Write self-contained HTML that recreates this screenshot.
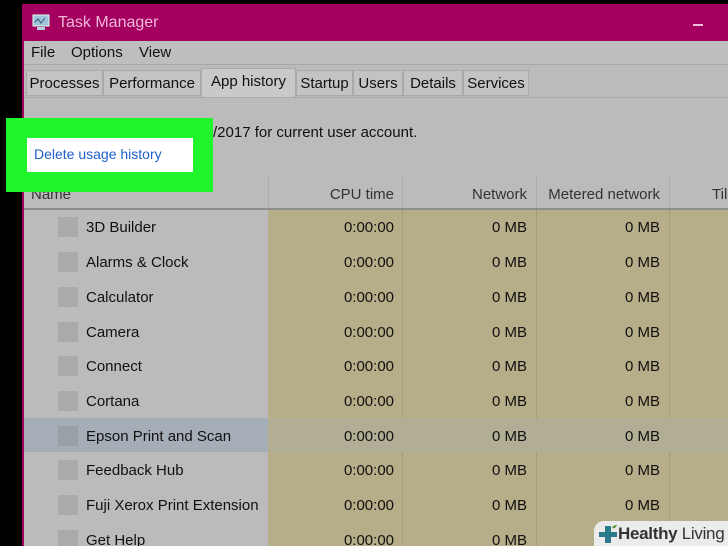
<!DOCTYPE html>
<html style="overflow:hidden;height:546px"><head><style>
body{margin:0;width:728px;height:546px;overflow:hidden;background:#000;font-family:"Liberation Sans",sans-serif;position:relative}
.a{position:absolute;white-space:nowrap}
.win{left:22px;top:4px;width:706px;height:542px;background:#bbbbbb;border-left:2px solid #a3005f;box-sizing:border-box}
.title{left:22px;top:4px;width:706px;height:37px;background:#a3005f;color:#f0b8d8;font-size:16px}
.menu{left:24px;top:41px;width:704px;height:23px;background:#bebebe;border-bottom:1px solid #a8a8a8;font-size:15px;color:#111}
.tab{position:absolute;top:70px;height:26px;border:1px solid #a9a9a9;background:#c3c3c3;font-size:15px;line-height:26px;text-align:center;color:#111;box-sizing:border-box;white-space:nowrap}
.row{position:absolute;left:24px;width:704px;height:34px;font-size:15px;color:#111;overflow:hidden}
.c{position:absolute;top:2px;height:32px;line-height:34px;text-align:right;white-space:nowrap}
.ic{position:absolute;left:34px;top:8px;width:20px;height:20px;background:#aaaaaa}
</style></head><body>
<div class="a win"></div>
<div class="a title"><svg class="a" style="left:9px;top:9px" width="20" height="18"><rect x="2" y="2" width="16" height="11" fill="#9fc4d8" stroke="#dfe" /><path d="M4 9 L7 6 L10 10 L14 5" stroke="#357" fill="none"/><rect x="6" y="14" width="8" height="3" fill="#bcd"/></svg><span class="a" style="left:36px;top:10px">Task Manager</span><div class="a" style="left:671px;top:20px;width:10px;height:2px;background:#f0c0dc"></div></div>
<div class="a menu"><span class="a" style="left:7px;top:3px">File</span><span class="a" style="left:47px;top:3px">Options</span><span class="a" style="left:115px;top:3px">View</span></div>
<div class="tab" style="left:26px;width:77px">Processes</div>
<div class="tab" style="left:103px;width:98px">Performance</div>
<div class="tab" style="left:201px;width:95px;top:68px;height:30px;background:#c9c9c9;border-bottom:none">App history</div>
<div class="tab" style="left:296px;width:57px">Startup</div>
<div class="tab" style="left:353px;width:50px">Users</div>
<div class="tab" style="left:403px;width:60px">Details</div>
<div class="tab" style="left:463px;width:66px">Services</div>
<div class="a" style="left:24px;top:97px;width:704px;height:1px;background:#a9a9a9"></div>
<span class="a" style="left:213px;top:124px;font-size:15px;color:#111">/2017 for current user account.</span>
<div class="a" style="left:268px;top:175px;width:1px;height:33px;background:#aaa"></div>
<div class="a" style="left:402px;top:175px;width:1px;height:33px;background:#aaa"></div>
<div class="a" style="left:536px;top:175px;width:1px;height:33px;background:#aaa"></div>
<div class="a" style="left:669px;top:175px;width:1px;height:33px;background:#aaa"></div>
<div class="a" style="left:24px;top:186px;width:704px;font-size:15px;color:#333">
<span class="a" style="left:7px">Name</span><span class="a" style="right:334px">CPU time</span><span class="a" style="right:201px">Network</span><span class="a" style="right:68px">Metered network</span><span class="a" style="left:688px">Til</span></div>
<div class="a" style="left:24px;top:208px;width:704px;height:2px;background:#8e8e8e"></div>
<div class="a" style="left:268px;top:210px;width:460px;height:336px;background:#b6ad89"></div>
<div class="a" style="left:402px;top:210px;width:1px;height:336px;background:#a59c7a"></div>
<div class="a" style="left:536px;top:210px;width:1px;height:336px;background:#a59c7a"></div>
<div class="a" style="left:669px;top:210px;width:1px;height:336px;background:#a59c7a"></div>
<div class="a" style="left:24px;top:418px;width:244px;height:34px;background:#a5aeb6"></div>
<div class="a" style="left:268px;top:418px;width:460px;height:34px;background:#b2ae96"></div>
<div class="row" style="top:209px"><div class="ic"></div><span class="c" style="left:62px;text-align:left">3D Builder</span><span class="c" style="right:334px">0:00:00</span><span class="c" style="right:201px">0 MB</span><span class="c" style="right:68px">0 MB</span></div>
<div class="row" style="top:244px"><div class="ic"></div><span class="c" style="left:62px;text-align:left">Alarms &amp; Clock</span><span class="c" style="right:334px">0:00:00</span><span class="c" style="right:201px">0 MB</span><span class="c" style="right:68px">0 MB</span></div>
<div class="row" style="top:279px"><div class="ic"></div><span class="c" style="left:62px;text-align:left">Calculator</span><span class="c" style="right:334px">0:00:00</span><span class="c" style="right:201px">0 MB</span><span class="c" style="right:68px">0 MB</span></div>
<div class="row" style="top:314px"><div class="ic"></div><span class="c" style="left:62px;text-align:left">Camera</span><span class="c" style="right:334px">0:00:00</span><span class="c" style="right:201px">0 MB</span><span class="c" style="right:68px">0 MB</span></div>
<div class="row" style="top:348px"><div class="ic"></div><span class="c" style="left:62px;text-align:left">Connect</span><span class="c" style="right:334px">0:00:00</span><span class="c" style="right:201px">0 MB</span><span class="c" style="right:68px">0 MB</span></div>
<div class="row" style="top:383px"><div class="ic"></div><span class="c" style="left:62px;text-align:left">Cortana</span><span class="c" style="right:334px">0:00:00</span><span class="c" style="right:201px">0 MB</span><span class="c" style="right:68px">0 MB</span></div>
<div class="row" style="top:418px"><div class="ic" style="background:#98a0a8"></div><span class="c" style="left:62px;text-align:left">Epson Print and Scan</span><span class="c" style="right:334px">0:00:00</span><span class="c" style="right:201px">0 MB</span><span class="c" style="right:68px">0 MB</span></div>
<div class="row" style="top:452px"><div class="ic"></div><span class="c" style="left:62px;text-align:left">Feedback Hub</span><span class="c" style="right:334px">0:00:00</span><span class="c" style="right:201px">0 MB</span><span class="c" style="right:68px">0 MB</span></div>
<div class="row" style="top:487px"><div class="ic"></div><span class="c" style="left:62px;text-align:left">Fuji Xerox Print Extension</span><span class="c" style="right:334px">0:00:00</span><span class="c" style="right:201px">0 MB</span><span class="c" style="right:68px">0 MB</span></div>
<div class="row" style="top:522px;height:24px"><div class="ic"></div><span class="c" style="left:62px;text-align:left;height:22px">Get Help</span><span class="c" style="right:334px;height:22px">0:00:00</span><span class="c" style="right:201px;height:22px">0 MB</span></div>
<div class="a" style="left:6px;top:118px;width:207px;height:74px;background:#1ff52a"></div>
<div class="a" style="left:27px;top:138px;width:166px;height:34px;background:#fff"></div>
<span class="a" style="left:34px;top:146px;font-size:14px;color:#2060c8">Delete usage history</span>
<div class="a" style="left:594px;top:521px;width:134px;height:25px;background:#ebebeb;border-radius:10px 0 0 0"></div>
<svg class="a" style="left:598px;top:524px" width="22" height="20"><path d="M7 2h6v6h6v5h-6v6H7v-6H1V8h6z" fill="#2a7a8a"/><path d="M14 4c1-3 4-3 5-3-1 2-2 4-5 3z" fill="#5a9a3a"/></svg>
<span class="a" style="left:618px;top:524px;font-size:17px;line-height:20px;color:#333;letter-spacing:-0.3px"><b>Healthy</b> Living</span>
</body></html>
